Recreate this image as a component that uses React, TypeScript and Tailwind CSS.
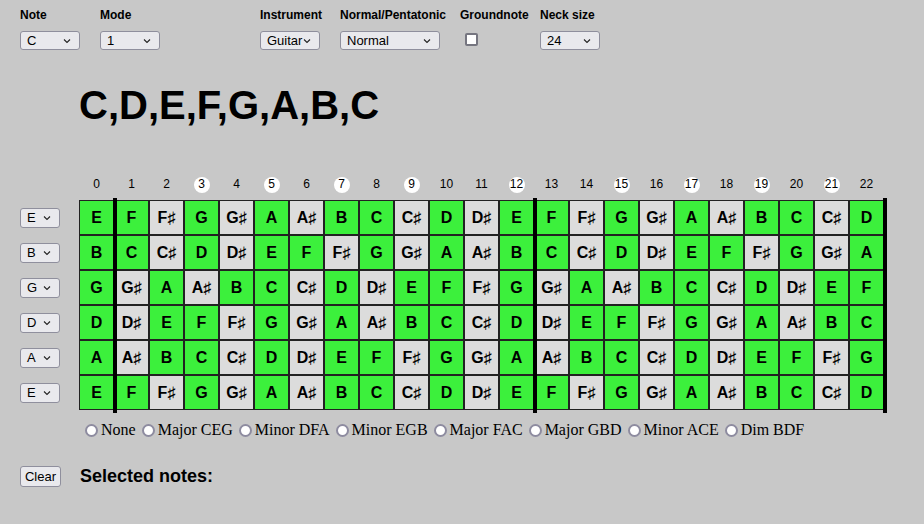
import { ReactNode } from "react"

const CHROMATIC = ["C", "C#", "D", "D#", "E", "F", "F#", "G", "G#", "A", "A#", "B"]
const STRINGS = ["E", "B", "G", "D", "A", "E"]
const FRETS = Array.from({ length: 23 }, (_, i) => i)
const MARKERS = [3, 5, 7, 9, 12, 15, 17, 19, 21]
const CHORDS = ["None", "Major CEG", "Minor DFA", "Minor EGB", "Major FAC", "Major GBD", "Minor ACE", "Dim BDF"]

function Chevron() {
  return (
    <svg width="8" height="5" viewBox="0 0 8 5" className="pointer-events-none absolute right-[9px] top-1/2 -translate-y-1/2">
      <path d="M1 1 L4 4 L7 1" fill="none" stroke="#222" strokeWidth="1.1" />
    </svg>
  )
}

function Select({ value, width, height = "h-[19px]" }: { value: string; width: string; height?: string }) {
  return (
    <div className={`relative ${width} ${height}`}>
      <div className="flex h-full w-full items-center rounded-[3px] border border-[#8f8f9d] bg-[#e9e9ed] pl-[6px] text-[13px] leading-none text-black">
        {value}
      </div>
      <Chevron />
    </div>
  )
}

function Control({ label, children, width }: { label: string; children: ReactNode; width: string }) {
  return (
    <div className={`flex flex-col ${width}`}>
      <div className="text-[12px] font-bold leading-[14px]">{label}</div>
      <div className="mt-[9px]">{children}</div>
    </div>
  )
}

function noteAt(open: string, fret: number) {
  const idx = (CHROMATIC.indexOf(open) + fret) % 12
  return CHROMATIC[idx]
}

export default function App() {
  return (
    <div className="min-h-screen w-full bg-[#c8c8c8] font-['Liberation_Sans',Arial,sans-serif] text-black">
      {/* Controls */}
      <div className="flex pl-5 pt-[8px]">
        <Control label="Note" width="w-[80px]">
          <Select value="C" width="w-[60px]" />
        </Control>
        <Control label="Mode" width="w-[160px]">
          <Select value="1" width="w-[60px]" />
        </Control>
        <Control label="Instrument" width="w-[80px]">
          <Select value="Guitar" width="w-[60px]" />
        </Control>
        <Control label="Normal/Pentatonic" width="w-[120px]">
          <Select value="Normal" width="w-[100px]" />
        </Control>
        <Control label="Groundnote" width="w-[80px]">
          <div className="ml-[5px] mt-[2px] h-[13px] w-[13px] rounded-[2px] border-2 border-[#767680] bg-white" />
        </Control>
        <Control label="Neck size" width="w-[80px]">
          <Select value="24" width="w-[60px]" />
        </Control>
      </div>

      {/* Scale */}
      <h1 className="ml-[79px] mt-[32px] text-[40px] font-bold leading-[46px]">C,D,E,F,G,A,B,C</h1>

      {/* Fretboard */}
      <div className="mt-[49px] flex pl-5">
        <div className="flex w-[59px] flex-col pt-[23px]">
          {STRINGS.map((s, i) => (
            <div key={i} className="flex h-[35px] items-center">
              <Select value={s} width="w-[40px]" height="h-[20px]" />
            </div>
          ))}
        </div>
        <div className="flex flex-col">
          <div className="grid h-[15px] grid-cols-[repeat(23,35px)] text-[12px] leading-[15px]">
            {FRETS.map((f) => (
              <div key={f} className="flex justify-center">
                {MARKERS.includes(f) ? (
                  <span className="-mt-[0.5px] flex h-[16px] w-[16px] items-center justify-center rounded-full bg-white">{f}</span>
                ) : (
                  <span>{f}</span>
                )}
              </div>
            ))}
          </div>
          <div className="relative mt-[8px]">
            <div className="grid grid-cols-[repeat(23,35px)]">
              {STRINGS.map((s, r) =>
                FRETS.map((f) => {
                  const n = noteAt(s, f)
                  const sharp = n.includes("#")
                  return (
                    <div
                      key={`${r}-${f}`}
                      className={`flex h-[35px] items-center justify-center border border-[#222] text-[16px] font-bold ${
                        sharp ? "bg-[#dcdcdc]" : "bg-[#3cf03c]"
                      }`}
                    >
                      {n.replace("#", "♯")}
                    </div>
                  )
                })
              )}
            </div>
            <div className="absolute left-[34px] top-[-2px] h-[215px] w-[4px] bg-black" />
            <div className="absolute left-[454px] top-[-2px] h-[215px] w-[4px] bg-black" />
            <div className="absolute left-[804px] top-[-2px] h-[215px] w-[4px] bg-black" />
          </div>
        </div>
      </div>

      {/* Chords */}
      <div className="ml-[80px] mt-[10px] flex items-center font-['Liberation_Serif','Times_New_Roman',serif] text-[16px] leading-[20px]">
        {CHORDS.map((c) => (
          <label key={c} className="mr-[1px] flex items-center">
            <span className="ml-[5px] mr-[3px] h-[13px] w-[13px] rounded-full border-2 border-[#8e8ca0] bg-white" />
            {c}
          </label>
        ))}
      </div>

      {/* Selected */}
      <div className="mt-[23px] flex items-center pl-5">
        <button className="flex h-[21px] w-[41px] items-center justify-center rounded-[3px] border border-[#8f8f9d] bg-[#e9e9ed] text-[13px]">
          Clear
        </button>
        <div className="ml-[19px] text-[18px] font-bold">Selected notes:</div>
      </div>
    </div>
  )
}
